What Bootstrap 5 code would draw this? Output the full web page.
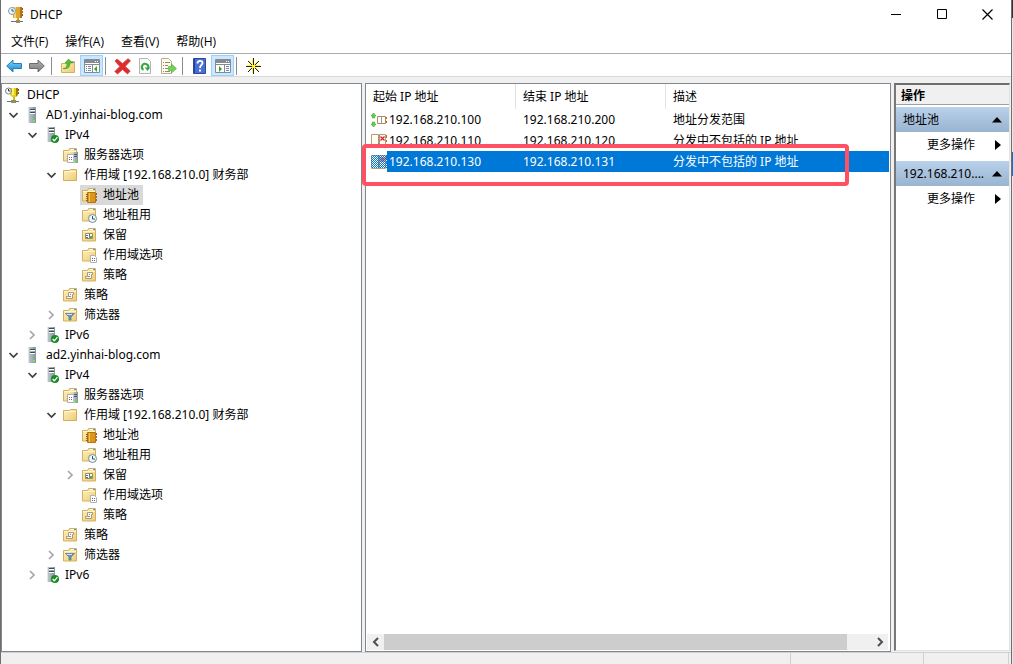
<!DOCTYPE html>
<html lang="zh-CN">
<head>
<meta charset="utf-8">
<meta name="viewport" content="width=device-width, initial-scale=1">
<title>DHCP</title>
<link href="https://cdn.jsdelivr.net/npm/bootstrap@5.3.0/dist/css/bootstrap.min.css" rel="stylesheet">
<style>
  body { font: 12px/20px "Noto Sans", "Noto Sans CJK SC", sans-serif; color: #000; background: linear-gradient(#333 18px, #e8e8e8 18px 152px, #0078d7 152px 176px, #e8e8e8 176px); }
  button { border: 0; padding: 0; background: none; color: inherit; }
  svg { display: block; flex: none; }
  .mmc { background: #f0f0f0; border: solid #6e6e6e; border-width: 0 1px 0 0; margin-right: 1px; box-shadow: inset 1px 0 #6e6e6e; padding-left: 1px; min-height: 400px; }
  .titlebar { height: 29px; padding-left: 7px; gap: 6px; background: #fff; }
  .caption-btn { width: 46px; height: 29px; display: grid; place-items: center; }
  .menubar { height: 24px; background: #fff; padding: 2px 0 0 10px; gap: 17px; font-family: "Open Sans", "Noto Sans CJK SC", sans-serif; }
  .toolbar { height: 24px; background: #fff; border-top: 1px solid #a9abb3; border-bottom: 1px solid #d8d8d8; padding: 1px 0 0 2px; }
  .tool { width: 23px; height: 21px; display: grid; align-items: start; justify-items: start; padding: 3px 0 0 3px; }
  .tool.pressed { background: #cce8ff; box-shadow: inset 0 0 0 1px #99d1ff; padding-left: 4px; }
  .split { width: 1px; height: 18px; background: #8c8c8c; margin: 0 5px 0 2px; }
  .panes { padding-top: 6px; gap: 3px; min-height: 0; }
  .tree-pane { width: 361px; background: #fff; border: 1px solid #828790; padding: 1px 0 0 2px; flex: none; }
  .tree-pane ul { list-style: none; margin: 0; padding: 0; }
  .tree-pane ul ul ul { padding-left: 19px; }
  .twist { width: 19px; height: 20px; display: grid; align-items: center; padding-left: 4px; }
  .node { display: flex; align-items: center; height: 20px; gap: 6px; padding: 0 4px 0 1px; white-space: pre; }
  .node.chosen { background: #d9d9d9; }
  .list-pane { background: #fff; border: 1px solid #828790; min-width: 0; }
  .table-wrap { padding-right: 1px; }
  .ranges { width: 100%; table-layout: fixed; white-space: nowrap; }
  .ranges th { height: 25px; font-weight: 400; padding: 1px 7px 0; background: linear-gradient(#e2e2e2, #e2e2e2) right / 1px 100% no-repeat; }
  .ranges th:last-child { background: none; }
  .ranges td { height: 21px; padding: 0 7px; }
  .ranges td:first-child { padding-left: 5px; }
  .ip-cell { display: flex; align-items: center; gap: 2px; }
  .ranges .picked td { background: #0078d7; color: #fff; }
  .ranges .picked td:first-child { background: linear-gradient(90deg, #fff 21px, #0078d7 21px); }
  .outline { position: absolute; left: -4px; top: 60px; width: 487px; height: 42px; border: 4px solid #ff5064; border-radius: 4px; pointer-events: none; }
  .hscroll { height: 16px; background: #f0f0f0; margin: 0 2px 1px 1px; }
  .hscroll button { width: 17px; height: 16px; display: grid; place-items: center; }
  .thumb { width: 95%; background: #cdcdcd; }
  .actions { width: 116px; background: #fff; border: 2px solid #6d6d6d; border-right: 1px solid #e3e3e3; border-bottom: 1px solid #e3e3e3; border-left-color: #777; margin: 0 1px 1px 0; flex: none; }
  .actions h2 { font: inherit; font-weight: 700; height: 20px; line-height: 21px; margin: 0 0 2px; padding-left: 5px; background: #f0f0f0; border-bottom: 1px solid #a0a0a0; }
  .group-head { height: 25px; padding: 0 7px; background: linear-gradient(#b9d1ea, #99b4d1); }
  .more { height: 25px; padding: 0 8px 0 31px; }
  .statusbar { height: 12px; border-top: 1px solid #d0d0d0; flex: none; padding-right: 2px; }
  .statusbar span { border-right: 1px solid #d0d0d0; }
</style>
</head>
<body>
<svg width="0" height="0" class="position-absolute" aria-hidden="true">
  <defs>
    <linearGradient id="gold" x2="1" y2="1"><stop stop-color="#fff0bd"/><stop offset="1" stop-color="#eecb76"/></linearGradient>
    <linearGradient id="steel"><stop stop-color="#c3cdd2"/><stop offset="1" stop-color="#84949d"/></linearGradient>
    <linearGradient id="blue" x2="0" y2="1"><stop stop-color="#7fdcfb"/><stop offset="1" stop-color="#1683cd"/></linearGradient>
    <linearGradient id="gray" x2="0" y2="1"><stop stop-color="#b4b4b4"/><stop offset="1" stop-color="#7c7c7c"/></linearGradient>
    <pattern id="dots" width="2" height="2" patternUnits="userSpaceOnUse"><path d="M0 0h1v1H0zM1 1h1v1H1z" fill="#0078d7"/></pattern>
    <symbol id="folder" viewBox="0 0 16 16"><path d="M1.500 3.500h5l1-2h7v12.500h-13z" fill="url(#gold)" stroke="#d5b05c"/><path d="M9 2.500h5" stroke="#fff"/><path d="M12 2.500h2" stroke="#4c9be0"/><path d="M2 4.500h12" stroke="#fff5cf"/></symbol>
    <symbol id="plain" viewBox="0 0 16 16"><path d="M1.500 3.500h6l1-1h6v11h-13z" fill="url(#gold)" stroke="#d5b05c"/><path d="M2 4.500h12" stroke="#fff5cf"/></symbol>
    <symbol id="tower" viewBox="0 0 16 16"><path d="M4 0h8v16H4z" fill="url(#steel)"/><path d="M4.500 0v16" stroke="#e2e8ea"/><path d="M6 2.500h5M6 5.500h5" stroke="#3f4d55"/><path d="M6 3.500h5M6 6.500h5" stroke="#fff"/><path d="M9 13h2v2H9z" fill="#65f329"/></symbol>
    <symbol id="tower-ok" viewBox="0 0 16 16"><path d="M4 0h8v15H4z" fill="url(#steel)"/><path d="M4.500 0v15" stroke="#e2e8ea"/><path d="M6 1.500h5M6 4.500h5" stroke="#3f4d55"/><path d="M6 2.500h5M6 5.500h5" stroke="#fff"/><circle cx="12" cy="12" r="4" fill="#188b24"/><path d="m9.700 12 1.700 1.800 3-3.700" fill="none" stroke="#fff" stroke-width="1.300"/></symbol>
    <symbol id="dhcp" viewBox="0 0 16 16"><path d="M5 0h9v11H5z" fill="#e0a62b"/><path d="M6 0h2v11H6z" fill="#f9d273"/><path d="M12 0h2v11h-2z" fill="#b57413"/><path d="M14 1h1v2h-1zM14 7h1v2h-1z" fill="#db2d20"/><path d="M14 4h1v2h-1z" fill="#2e9b41"/><path d="M9 11h2v3H9z" fill="#d29b21"/><path d="M3 14.500h12" stroke="#66747a"/><path d="M8 13h4v3H8z" fill="#a08a50"/><circle cx="4" cy="4" r="3.500" fill="#eef5fa" stroke="#8898a4"/><path d="M4 2v2h2" fill="none" stroke="#35576d"/></symbol>
    <symbol id="dhcp-tree" viewBox="0 0 16 16"><path d="M5 1h8v6l-1 3H7L5 8z" fill="#e5cf20"/><path d="M7 1h2v7H7z" fill="#fff55b"/><path d="M11 1h2v6l-1 2h-1z" fill="#987d0a"/><path d="M13 2h1v2h-1z" fill="#e02516"/><path d="M13 5h1v2h-1z" fill="#298d31"/><path d="M8 10h2v4H8z" fill="#c8b622"/><path d="M2 14.500h12" stroke="#68777e"/><path d="M6 13h5v3H6z" fill="#8b8f62"/><circle cx="3.500" cy="4" r="3" fill="#fff" stroke="#777f86"/><path d="M3.500 2v2h2" fill="none" stroke="#333"/></symbol>
    <symbol id="options" viewBox="0 0 16 16"><use href="#folder"/><path d="M5.500 7.500h6v8h-6z" fill="#fff" stroke="#a7adb5"/><path d="M7 10h1v1H7zM9 10h1v1H9zM7 12h1v1H7zM9 12h1v1H9z" fill="#667"/><path d="M11 5h5v11h-5z" fill="url(#steel)"/><path d="M12 7.500h3M12 9.500h3" stroke="#4b5c66"/><path d="M13 13h2v2h-2z" fill="#5ce72c"/></symbol>
    <symbol id="pool" viewBox="0 0 16 16"><use href="#folder"/><path d="M6.500 5.500h8v10h-8z" fill="#dc961b" stroke="#b07413"/><path d="M8.500 6v9" stroke="#f7c550"/><path d="M5 7.500h2M5 9.500h2M5 11.500h2M5 13.500h2" stroke="#8c6426"/><path d="M15 6h1v2h-1z" fill="#e23b27"/><path d="M15 9h1v2h-1z" fill="#39a349"/><path d="M15 12h1v2h-1z" fill="#eb4934"/></symbol>
    <symbol id="lease" viewBox="0 0 16 16"><use href="#folder"/><circle cx="11.500" cy="11.500" r="4" fill="#edf7fb" stroke="#778b9a"/><path d="M11.500 9v3H14" fill="none" stroke="#31556a"/></symbol>
    <symbol id="reserve" viewBox="0 0 16 16"><use href="#folder"/><path d="M4.500 6.500h7v5h-7z" fill="#f7faf6" stroke="#9a8d6b"/><path d="M5 8h2v1H5zM8 7h1v2H8zM5 10h2v1H5z" fill="#536d8c"/><path d="M8 9h3v2H8z" fill="#56a65f"/></symbol>
    <symbol id="scopeopt" viewBox="0 0 16 16"><use href="#folder"/><path d="M9.500 8.500h4l2 2v5h-6z" fill="#fff" stroke="#adb1b8"/><path d="M11 11h1v1h-1zM13 11h1v1h-1zM11 13h1v1h-1zM13 13h1v1h-1z" fill="#596579"/></symbol>
    <symbol id="policy" viewBox="0 0 16 16"><use href="#folder"/><path d="M6.500 5.500h5v2h-1v4h-6v-2h2z" fill="#f8f8f6" stroke="#a99a78"/><path d="M8 7.500h1M7 9.500h2" stroke="#858b96"/></symbol>
    <symbol id="filter" viewBox="0 0 16 16"><use href="#folder"/><path d="M3.500 6.500h9L9 10v3H7v-3z" fill="#5794cc" stroke="#667d91" stroke-width=".8"/><path d="M5 7.500h5" stroke="#cde9ff"/></symbol>
    <symbol id="down" viewBox="0 0 10 10"><path d="m1.500 3 4 4 4-4" fill="none" stroke="#404040" stroke-width="1.700"/></symbol>
    <symbol id="right" viewBox="0 0 10 10"><path d="m3 1 4 4-4 4" fill="none" stroke="#a6a6a6" stroke-width="1.700"/></symbol>
    <symbol id="book-x" viewBox="0 0 16 16"><path d="M.5 1.500h7v13h-7zM8.500 1.500h6v13h-6z" fill="#fffdf2" stroke="#baa072"/><path d="M8 2v13" stroke="#777" stroke-dasharray="1 1"/><path d="m9.500 3.500 4 4m0-4-4 4" stroke="#e31b2d" stroke-width="1.300"/><path d="M15.500 2v3m0 2v2" stroke="#d15b35"/></symbol>
  </defs>
</svg>

<div class="mmc vh-100 d-flex flex-column overflow-hidden">
  <header class="titlebar d-flex align-items-center">
    <svg width="16" height="16"><use href="#dhcp"/></svg>
    <span>DHCP</span>
    <div class="d-flex ms-auto">
      <button class="caption-btn" aria-label="最小化"><svg width="10" height="11"><path d="M0 5.500h10" stroke="#000"/></svg></button>
      <button class="caption-btn" aria-label="最大化"><svg width="10" height="11"><path d="M.5.5h9v9h-9z" fill="none" stroke="#000"/></svg></button>
      <button class="caption-btn" aria-label="关闭"><svg width="12" height="11"><path d="m.5.5 10 10m0-10-10 10" stroke="#000" stroke-width="1.200"/></svg></button>
    </div>
  </header>
  <nav class="menubar d-flex align-items-center">
    <button>文件(F)</button><button>操作(A)</button><button>查看(V)</button><button>帮助(H)</button>
  </nav>
  <div class="toolbar d-flex align-items-center" role="toolbar">
    <button class="tool" aria-label="后退"><svg width="16" height="16"><path d="M.7 8 7 2v3.500h8.500v5H7V14z" fill="url(#blue)" stroke="#2c7bb8"/></svg></button>
    <button class="tool" aria-label="前进"><svg width="16" height="16"><path d="M15.300 8 9 2v3.500H.5v5H9V14z" fill="url(#gray)" stroke="#6c6c6c"/></svg></button>
    <span class="split"></span>
    <button class="tool" aria-label="上一级"><svg width="16" height="16"><path d="M1.500 5.500h6l1-2h6v11h-13z" fill="url(#gold)" stroke="#d5b05c"/><path d="M11 4.500h3" stroke="#4c9be0"/><path d="M3 10.500c4 0 4-3 4-5.500H5l3.500-4 4 4H10c0 4-2 6.500-7 5.500z" fill="#55bd32" stroke="#3d9c2c" stroke-width=".6"/></svg></button>
    <button class="tool pressed" aria-label="显示控制台树"><svg width="16" height="16"><path d="M.5 1.500h15v13H.5z" fill="#fff" stroke="#858b94"/><path d="M1 2h14v3H1z" fill="#858b94"/><path d="M11 3.500h1m1 0h1" stroke="#fff"/><path d="M1 6.500h14M8.500 7v8" stroke="#858b94"/><path d="M2 8.500h1m1 0h3M2 10.500h1m1 0h3M2 12.500h1m1 0h3" stroke="#6f87a3"/><path d="M13 8v6l-3-3z" fill="#35a51f"/></svg></button>
    <span class="split"></span>
    <button class="tool" aria-label="删除"><svg width="17" height="17"><path d="m3 1 5.500 4.500L14 .7l2.500 2L11.200 8.500l5 4.500-2.700 3-5-4.500-5 4.500L.8 13.500l5-5L1 3z" fill="#e12c2c" stroke="#c9383a" stroke-width=".7"/></svg></button>
    <button class="tool" aria-label="刷新"><svg width="16" height="16"><path d="M2.500.5h8l3 3v12h-11z" fill="#fbfbf8" stroke="#b4b4b4"/><path d="M6.500 11.800a3.200 3.200 0 1 1 4.500-1.500" fill="none" stroke="#35a641" stroke-width="2"/><path d="M7.800 9.500h5.500L10.500 13z" fill="#35a641"/></svg></button>
    <button class="tool" aria-label="导出列表"><svg width="17" height="16"><path d="M1.500.5h7l3 3v12h-10z" fill="#fffbe8" stroke="#b9ad8c"/><path d="M3 4.500h1m1 0h5M3 7.500h1m1 0h3M3 10.500h1m1 0h3M3 13.500h1m1 0h5" stroke="#8b8b8b"/><path d="M8.500 8.500h3V6l5 4.500-5 4.500v-2.500h-3z" fill="#75d155" stroke="#4bab3b" stroke-width=".6"/></svg></button>
    <span class="split"></span>
    <button class="tool" aria-label="帮助"><svg width="16" height="16"><path d="M2.500.5h12v15h-12z" fill="#4a6fd2" stroke="#2c4a9e"/><path d="M3.500 1v14" stroke="#243f8c"/><path d="M6.500 5.500c0-3.500 5-3.500 5-.5 0 2-2.500 2-2.500 5" fill="none" stroke="#fff" stroke-width="1.800"/><path d="M8 11.500h2v2H8z" fill="#fff"/></svg></button>
    <button class="tool pressed" aria-label="显示操作窗格"><svg width="16" height="16"><path d="M.5 1.500h15v13H.5z" fill="#fff" stroke="#858b94"/><path d="M1 2h14v3H1z" fill="#858b94"/><path d="M11 3.500h1m1 0h1" stroke="#fff"/><path d="M1 6.500h14M9.500 7v8" stroke="#858b94"/><path d="M11 8.500h3M11 10.500h3M11 12.500h3" stroke="#6f87a3"/><path d="M4 8v6l3-3z" fill="#35a51f"/></svg></button>
    <span class="split"></span>
    <button class="tool" aria-label="新建"><svg width="17" height="16"><path d="M8.500 0v16M1 8.500h15" stroke="#222"/><path d="M7.500 1v14M2 7.500h13" stroke="#fff23a"/><path d="m3 3 11 11m0-11-11 11" stroke="#222"/><path d="m4 3 9.500 9.500M13 3l-9.500 9.500" stroke="#fff23a"/><path d="M7 7h3v3H7z" fill="#ffee16"/></svg></button>
  </div>

  <main class="panes d-flex flex-grow-1">
    <nav class="tree-pane overflow-hidden" aria-label="控制台树">
      <ul>
        <li><button class="node"><svg width="16" height="16"><use href="#dhcp-tree"/></svg>DHCP</button>
          <ul>
            <li><div class="d-flex"><button class="twist" aria-label="折叠"><svg width="10" height="10"><use href="#down"/></svg></button><button class="node"><svg width="16" height="16"><use href="#tower"/></svg>AD1.yinhai-blog.com</button></div>
              <ul>
                <li><div class="d-flex"><button class="twist" aria-label="折叠"><svg width="10" height="10"><use href="#down"/></svg></button><button class="node"><svg width="16" height="16"><use href="#tower-ok"/></svg>IPv4</button></div>
                  <ul>
                    <li class="d-flex"><span class="twist"></span><button class="node"><svg width="16" height="16"><use href="#options"/></svg>服务器选项</button></li>
                    <li><div class="d-flex"><button class="twist" aria-label="折叠"><svg width="10" height="10"><use href="#down"/></svg></button><button class="node"><svg width="16" height="16"><use href="#plain"/></svg>作用域 [192.168.210.0] 财务部</button></div>
                      <ul>
                        <li class="d-flex"><span class="twist"></span><button class="node chosen"><svg width="16" height="16"><use href="#pool"/></svg>地址池</button></li>
                        <li class="d-flex"><span class="twist"></span><button class="node"><svg width="16" height="16"><use href="#lease"/></svg>地址租用</button></li>
                        <li class="d-flex"><span class="twist"></span><button class="node"><svg width="16" height="16"><use href="#reserve"/></svg>保留</button></li>
                        <li class="d-flex"><span class="twist"></span><button class="node"><svg width="16" height="16"><use href="#scopeopt"/></svg>作用域选项</button></li>
                        <li class="d-flex"><span class="twist"></span><button class="node"><svg width="16" height="16"><use href="#policy"/></svg>策略</button></li>
                      </ul>
                    </li>
                    <li class="d-flex"><span class="twist"></span><button class="node"><svg width="16" height="16"><use href="#policy"/></svg>策略</button></li>
                    <li class="d-flex"><button class="twist" aria-label="展开"><svg width="10" height="10"><use href="#right"/></svg></button><button class="node"><svg width="16" height="16"><use href="#filter"/></svg>筛选器</button></li>
                  </ul>
                </li>
                <li class="d-flex"><button class="twist" aria-label="展开"><svg width="10" height="10"><use href="#right"/></svg></button><button class="node"><svg width="16" height="16"><use href="#tower-ok"/></svg>IPv6</button></li>
              </ul>
            </li>
            <li><div class="d-flex"><button class="twist" aria-label="折叠"><svg width="10" height="10"><use href="#down"/></svg></button><button class="node"><svg width="16" height="16"><use href="#tower"/></svg>ad2.yinhai-blog.com</button></div>
              <ul>
                <li><div class="d-flex"><button class="twist" aria-label="折叠"><svg width="10" height="10"><use href="#down"/></svg></button><button class="node"><svg width="16" height="16"><use href="#tower-ok"/></svg>IPv4</button></div>
                  <ul>
                    <li class="d-flex"><span class="twist"></span><button class="node"><svg width="16" height="16"><use href="#options"/></svg>服务器选项</button></li>
                    <li><div class="d-flex"><button class="twist" aria-label="折叠"><svg width="10" height="10"><use href="#down"/></svg></button><button class="node"><svg width="16" height="16"><use href="#plain"/></svg>作用域 [192.168.210.0] 财务部</button></div>
                      <ul>
                        <li class="d-flex"><span class="twist"></span><button class="node"><svg width="16" height="16"><use href="#pool"/></svg>地址池</button></li>
                        <li class="d-flex"><span class="twist"></span><button class="node"><svg width="16" height="16"><use href="#lease"/></svg>地址租用</button></li>
                        <li class="d-flex"><button class="twist" aria-label="展开"><svg width="10" height="10"><use href="#right"/></svg></button><button class="node"><svg width="16" height="16"><use href="#reserve"/></svg>保留</button></li>
                        <li class="d-flex"><span class="twist"></span><button class="node"><svg width="16" height="16"><use href="#scopeopt"/></svg>作用域选项</button></li>
                        <li class="d-flex"><span class="twist"></span><button class="node"><svg width="16" height="16"><use href="#policy"/></svg>策略</button></li>
                      </ul>
                    </li>
                    <li class="d-flex"><span class="twist"></span><button class="node"><svg width="16" height="16"><use href="#policy"/></svg>策略</button></li>
                    <li class="d-flex"><button class="twist" aria-label="展开"><svg width="10" height="10"><use href="#right"/></svg></button><button class="node"><svg width="16" height="16"><use href="#filter"/></svg>筛选器</button></li>
                  </ul>
                </li>
                <li class="d-flex"><button class="twist" aria-label="展开"><svg width="10" height="10"><use href="#right"/></svg></button><button class="node"><svg width="16" height="16"><use href="#tower-ok"/></svg>IPv6</button></li>
              </ul>
            </li>
          </ul>
        </li>
      </ul>
    </nav>

    <section class="list-pane position-relative flex-grow-1 d-flex flex-column">
      <div class="table-wrap">
        <table class="ranges">
          <colgroup><col style="width:150px"><col style="width:150px"><col></colgroup>
          <thead><tr><th scope="col">起始 IP 地址</th><th scope="col">结束 IP 地址</th><th scope="col">描述</th></tr></thead>
          <tbody>
            <tr><td><div class="ip-cell"><svg width="16" height="16"><path d="m2.500 1 2.500 3H3.500v2h-2V4H0zM2.500 15 5 12H3.500v-2h-2v2H0z" fill="#66cf4b" stroke="#3aa32b" stroke-width=".6"/><path d="M6.500 4.500h4v7h-4zM10.500 4.500h4v7h-4z" fill="#fff" stroke="#ad8a5b"/><path d="M10.500 5v6" stroke="#999"/><path d="M15.500 5v2m0 2v2" stroke="#d15b35"/></svg><span>192.168.210.100</span></div></td><td>192.168.210.200</td><td>地址分发范围</td></tr>
            <tr><td><div class="ip-cell"><svg width="16" height="16"><use href="#book-x"/></svg><span>192.168.210.110</span></div></td><td>192.168.210.120</td><td>分发中不包括的 IP 地址</td></tr>
            <tr class="picked"><td><div class="ip-cell"><svg width="16" height="16"><use href="#book-x"/><path d="M0 1h16v13H0z" fill="url(#dots)"/></svg><span>192.168.210.130</span></div></td><td>192.168.210.131</td><td>分发中不包括的 IP 地址</td></tr>
          </tbody>
        </table>
      </div>
      <div class="outline"></div>
      <div class="hscroll d-flex mt-auto">
        <button aria-label="向左滚动"><svg width="8" height="10"><path d="M6 1 2 5l4 4" fill="none" stroke="#505050" stroke-width="2"/></svg></button>
        <div class="flex-grow-1 d-flex"><div class="thumb"></div></div>
        <button aria-label="向右滚动"><svg width="8" height="10"><path d="m2 1 4 4-4 4" fill="none" stroke="#505050" stroke-width="2"/></svg></button>
      </div>
    </section>

    <aside class="actions">
      <h2>操作</h2>
      <button class="group-head w-100 d-flex align-items-center justify-content-between">地址池<svg width="10" height="6"><path d="M0 5.500 5 0l5 5.500z"/></svg></button>
      <button class="more w-100 d-flex align-items-center justify-content-between">更多操作<svg width="6" height="10"><path d="M0 0v10l6-5z"/></svg></button>
      <button class="group-head w-100 d-flex align-items-center justify-content-between mt-1">192.168.210....<svg width="10" height="6"><path d="M0 5.500 5 0l5 5.500z"/></svg></button>
      <button class="more w-100 d-flex align-items-center justify-content-between">更多操作<svg width="6" height="10"><path d="M0 0v10l6-5z"/></svg></button>
    </aside>
  </main>
  <footer class="statusbar d-flex"><span class="flex-grow-1"></span><span style="width:133px"></span><span style="width:85px"></span></footer>
</div>
<script src="https://cdn.jsdelivr.net/npm/bootstrap@5.3.0/dist/js/bootstrap.bundle.min.js"></script>
</body>
</html>
